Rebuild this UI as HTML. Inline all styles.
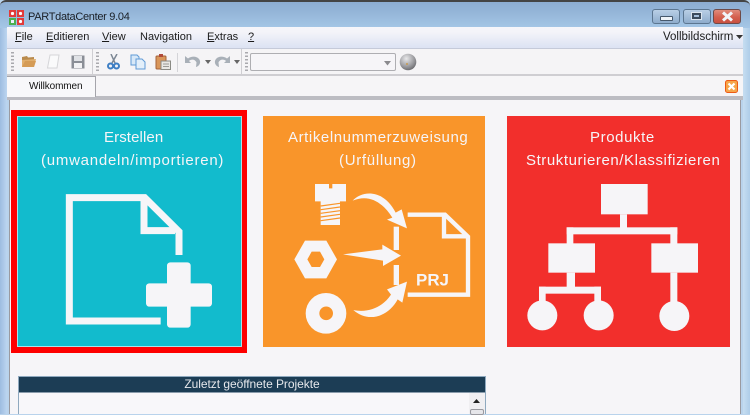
<!DOCTYPE html>
<html lang="de">
<head>
<meta charset="utf-8">
<title>PARTdataCenter 9.04</title>
<style>
html,body{margin:0;padding:0;width:750px;height:414px;overflow:hidden;background:#b9d3ec;font-family:"Liberation Sans",sans-serif}
.a{position:absolute}
#title{left:0;top:0;width:750px;height:28px;background:linear-gradient(180deg,#8dadd1 0,#94b5d8 10px,#a6c8e7 27px);border-top:2px solid #444;box-sizing:border-box;border-radius:6px 6px 0 0}
#leftb{left:0;top:28px;width:7px;height:386px;background:linear-gradient(90deg,#9dbce0,#bcd5f0)}
#rightb{left:743px;top:28px;width:7px;height:386px;background:linear-gradient(90deg,#c6ddf1,#aecde8)}
#menu{left:7px;top:27px;width:736px;height:21px;background:linear-gradient(180deg,#f6f6fa 0,#f4f4f9 5px,#dde3f3 20px)}
#tb{left:7px;top:48px;width:736px;height:28px;background:#f5f4f6;border-top:1px solid #c5cad9;border-bottom:2px solid #cfced2;box-sizing:border-box}
#tabs{left:7px;top:76px;width:736px;height:21px;background:#f6f5f7}
#bar{left:7px;top:96px;width:736px;height:4px;background:#bcbcc2}
#content{left:9px;top:100px;width:732px;height:314px;background:#f6f5f8;border-left:1px solid #9a9aa0;border-right:1px solid #9a9aa0;box-sizing:border-box}
#tab{left:7px;top:76px;width:89px;height:21px;background:#f8f8fa;border:1px solid #a5a5ab;border-bottom:0;border-left:0;box-sizing:border-box}
#tabt{left:29px;top:79px;font-size:10px;line-height:15px;color:#111;letter-spacing:-.1px;white-space:nowrap}
.m{top:30px;font-size:11px;line-height:15px;color:#1b1b1b;white-space:nowrap}
.t{color:#f6f5f8;font-size:15px;line-height:23px;white-space:nowrap}
.g{width:3px;height:21px;top:52px;background:repeating-linear-gradient(180deg,#a9a9ad 0,#a9a9ad 1.5px,transparent 1.5px,transparent 3.5px)}
</style>
</head>
<body>
<div class="a" id="title"></div>
<div class="a" id="leftb"></div>
<div class="a" id="rightb"></div>
<div class="a" id="menu"></div>
<div class="a" id="tb"></div>
<div class="a" id="tabs"></div>
<div class="a" id="bar"></div>
<div class="a" id="content"></div>
<div class="a" id="tab"></div>
<div class="a" id="tabt">Willkommen</div>

<svg class="a" style="left:9px;top:10px" width="16" height="15" viewBox="0 0 16 15">
<rect x="0" y="0" width="7" height="7" fill="#e23a3a"/><rect x="8" y="0" width="7" height="7" fill="#e23a3a"/>
<rect x="0" y="8" width="7" height="7" fill="#4caf50"/><rect x="8" y="8" width="7" height="7" fill="#e23a3a"/>
<circle cx="3.500" cy="3.500" r="1.600" fill="#fff"/><circle cx="11.500" cy="3.500" r="1.600" fill="#fff"/><rect x="2" y="10" width="3" height="3" fill="#eef"/><circle cx="11.500" cy="11.500" r="1.600" fill="#fff"/>
</svg>
<div class="a" style="left:28px;top:10px;font-size:11px;line-height:15px;color:#1a1f26;white-space:nowrap;letter-spacing:-.3px">PARTdataCenter 9.04</div>

<div class="a" style="left:652px;top:9px;width:28px;height:15px;box-sizing:border-box;border:1px solid #5c7690;border-radius:3px;background:linear-gradient(180deg,#b9cfe6,#8eaccc)"></div>
<div class="a" style="left:660px;top:16px;width:11px;height:3px;background:#eef3f8;border:1px solid #46586c;border-radius:1px"></div>
<div class="a" style="left:683px;top:9px;width:28px;height:15px;box-sizing:border-box;border:1px solid #5c7690;border-radius:3px;background:linear-gradient(180deg,#b9cfe6,#8eaccc)"></div>
<div class="a" style="left:692px;top:13px;width:9px;height:6px;box-sizing:border-box;border:2px solid #3c4c5e;outline:1px solid #dce6f0"></div>
<div class="a" style="left:713px;top:9px;width:28px;height:15px;box-sizing:border-box;border:1px solid #6e4a48;border-radius:3px;background:linear-gradient(180deg,#e08c7c 0,#d4604e 55%,#c85040 100%)"></div>
<svg class="a" style="left:721px;top:11px" width="13" height="11" viewBox="0 0 13 11"><path d="M2 1.500L11 9.500M11 1.500L2 9.500" stroke="#f2f4f8" stroke-width="3"/></svg>

<div class="a m" style="left:15px"><u>F</u>ile</div>
<div class="a m" style="left:46px"><u>E</u>ditieren</div>
<div class="a m" style="left:102px"><u>V</u>iew</div>
<div class="a m" style="left:140px">Navigation</div>
<div class="a m" style="left:207px"><u>E</u>xtras</div>
<div class="a m" style="left:248px"><u>?</u></div>
<div class="a m" style="left:663px;font-size:11.5px">Vollbildschirm</div>
<svg class="a" style="left:736px;top:35px" width="8" height="5"><path d="M0 0H7L3.500 4Z" fill="#333"/></svg>

<div class="a g" style="left:11px"></div>
<svg class="a" style="left:21px;top:54px" width="16" height="15" viewBox="0 0 16 15"><path d="M1 3L6 2L7 3.500L13 3V6H1Z" fill="#b98a4c"/><path d="M1 13L1 6L15 5L13 13Z" fill="#e0ae6c"/><path d="M1 13L4 7H15L13 13Z" fill="#d59b55"/></svg>
<svg class="a" style="left:46px;top:54px" width="15" height="15" viewBox="0 0 15 15"><path d="M4 1H13L11 14H1.500Z" fill="#fafafb" stroke="#d5d5d8"/></svg>
<svg class="a" style="left:71px;top:55px" width="14" height="14" viewBox="0 0 14 14"><rect x=".5" y=".5" width="13" height="13" fill="#8a8e96"/><rect x="3" y="1" width="8" height="5" fill="#e0e2e6"/><rect x="3" y="8" width="8" height="5" fill="#f2f2f4"/></svg>
<div class="a" style="left:92px;top:49px;width:1px;height:25px;background:#cfced2"></div>
<div class="a g" style="left:96px"></div>
<svg class="a" style="left:107px;top:54px" width="13" height="16" viewBox="0 0 13 16"><path d="M10 0L5 9M4 0L8 9" stroke="#7c8794" stroke-width="1.500" fill="none"/><circle cx="3.500" cy="12" r="2.500" fill="none" stroke="#3f7fc4" stroke-width="2"/><circle cx="9.500" cy="12" r="2.500" fill="none" stroke="#3f7fc4" stroke-width="2"/></svg>
<svg class="a" style="left:130px;top:54px" width="16" height="16" viewBox="0 0 16 16"><path d="M1 1H7L9 3V11H1Z" fill="#d7e8f8" stroke="#5f9ad6"/><path d="M6 5H12L15 8V15H6Z" fill="#e3effa" stroke="#5f9ad6"/></svg>
<svg class="a" style="left:155px;top:54px" width="16" height="16" viewBox="0 0 16 16"><rect x="1" y="2" width="10" height="13" rx="1" fill="#d9965a" stroke="#a5633a"/><rect x="4" y="0" width="4" height="3" fill="#b04a3a"/><rect x="6" y="7" width="9.500" height="8.500" fill="#e8e8e4" stroke="#8a8a84"/><path d="M8 10H14M8 12.500H14" stroke="#9a9a96"/></svg>
<div class="a" style="left:177px;top:53px;width:1px;height:19px;background:#d4d4d8"></div>
<svg class="a" style="left:185px;top:55px" width="16" height="13" viewBox="0 0 16 13"><path d="M0 1V8H6L4 6C6 4 10 4 11.500 7.500L11 12C14.500 11 16.500 7 14 4C11.500 1 6.500 1 3 3.500Z" fill="#a9b0b8"/></svg>
<svg class="a" style="left:205px;top:60px" width="6" height="4"><path d="M0 0H6L3 4Z" fill="#666"/></svg>
<svg class="a" style="left:214px;top:55px" width="16" height="13" viewBox="0 0 16 13"><path d="M16 1V8H10L12 6C10 4 6 4 4.500 7.500L5 12C1.500 11 -.5 7 2 4C4.500 1 9.500 1 13 3.500Z" fill="#a9b0b8"/></svg>
<svg class="a" style="left:234px;top:60px" width="6" height="4"><path d="M0 0H6L3 4Z" fill="#666"/></svg>
<div class="a" style="left:241px;top:49px;width:1px;height:25px;background:#cfced2"></div>
<div class="a g" style="left:245px"></div>
<div class="a" style="left:250px;top:53px;width:146px;height:18px;box-sizing:border-box;border:1px solid #aeaeb2;border-radius:2px;background:#f6f5f8"></div>
<svg class="a" style="left:384px;top:61px" width="8" height="5"><path d="M0 0H7L3.500 4.500Z" fill="#8a8a8e"/></svg>
<svg class="a" style="left:399px;top:53px" width="18" height="18"><defs><radialGradient id="gl" cx=".4" cy=".3" r=".8"><stop offset="0" stop-color="#e8e8ea"/><stop offset=".6" stop-color="#9a9a9e"/><stop offset="1" stop-color="#5c5c60"/></radialGradient></defs><circle cx="9" cy="9" r="8.300" fill="url(#gl)"/><circle cx="8" cy="11" r="1" fill="#c89a50"/></svg>

<svg class="a" style="left:725px;top:80px" width="13" height="13" viewBox="0 0 13 13"><rect x=".5" y=".5" width="12" height="12" rx="2" fill="#f6a64a" stroke="#ee5a14"/><path d="M3.500 3.500L9.500 9.500M9.500 3.500L3.500 9.500" stroke="#fff" stroke-width="2.200"/></svg>

<!-- tile 1 -->
<div class="a" style="left:11px;top:110px;width:236px;height:243px;background:#fe0000"></div>
<div class="a" style="left:17px;top:116px;width:225px;height:231px;box-sizing:border-box;background:#12bbcd;border:1px solid #a8e2e8"></div>
<div class="a t" style="left:104px;top:126px;letter-spacing:.1px">Erstellen</div>
<div class="a t" style="left:41px;top:149px;letter-spacing:.75px">(umwandeln/importieren)</div>
<svg class="a" style="left:0;top:105px" width="260" height="255" viewBox="0 0 780 765">
<path d="M482 648H208V278H434L537 380V450" fill="none" stroke="#f6f5f8" stroke-width="21"/>
<path d="M432 285V377H525" fill="none" stroke="#f6f5f8" stroke-width="21"/>
<path d="M501 482a10 10 0 0 1 10-10h51a10 10 0 0 1 10 10v53h54a10 10 0 0 1 10 10v50a10 10 0 0 1-10 10h-54v53a10 10 0 0 1-10 10h-51a10 10 0 0 1-10-10v-53h-53a10 10 0 0 1-10-10v-50a10 10 0 0 1 10-10h53z" fill="#f6f5f8"/>
</svg>

<!-- tile 2 -->
<div class="a" style="left:263px;top:116px;width:222px;height:231px;background:#f9952a"></div>
<div class="a t" style="left:288px;top:126px;letter-spacing:.58px">Artikelnummerzuweisung</div>
<div class="a t" style="left:339px;top:149px;letter-spacing:.7px">(Urfüllung)</div>
<svg class="a" style="left:255px;top:170px" width="240" height="180" viewBox="0 0 720 540">
<g fill="#f6f5f8">
<path d="M180 42H222V55H232V42H273V94H255V165H197V94H180Z"/>
<path d="M118 268L150 212H214L246 268L214 325H150ZM157 268L170 291H195L208 268L195 245H170Z" fill-rule="evenodd"/>
<path fill-rule="evenodd" d="M152 430a61 61 0 1 0 122 0a61 61 0 1 0-122 0zM193 430a20 20 0 1 1 41 0a20 20 0 1 1-41 0z"/>
<path d="M293 92C320 62 385 55 422 128L440 118L456 175L396 149L412 143C385 100 345 70 293 92Z"/>
<path d="M264 253L382 238V224L438 257L384 288V272Z"/>
<path d="M295 420C340 430 385 410 408 374L396 358L456 335L442 398L428 388C400 440 340 460 295 420Z"/>
<rect x="416" y="170" width="16" height="70"/>
<rect x="416" y="285" width="16" height="60"/>
</g>
<g stroke="#f9952a" stroke-width="3.500"><path d="M197 108L255 100M197 119L255 111M197 130L255 122M197 141L255 133M197 152L255 144"/></g>
<path d="M458 134H570L639 200V374H458" fill="none" stroke="#f6f5f8" stroke-width="13"/>
<path d="M567 134V199H639" fill="none" stroke="#f6f5f8" stroke-width="13"/>
<text x="483" y="346" font-family="Liberation Sans" font-weight="700" font-size="50" fill="#f6f5f8" textLength="99" lengthAdjust="spacingAndGlyphs">PRJ</text>
</svg>

<!-- tile 3 -->
<div class="a" style="left:507px;top:116px;width:223px;height:231px;background:#f22f2c"></div>
<div class="a t" style="left:590px;top:126px;letter-spacing:.6px">Produkte</div>
<div class="a t" style="left:526px;top:149px;letter-spacing:.57px">Strukturieren/Klassifizieren</div>
<svg class="a" style="left:500px;top:170px" width="240" height="180" viewBox="0 0 720 540">
<g fill="#f6f5f8">
<rect x="303" y="42" width="140" height="91"/>
<rect x="360" y="133" width="21" height="42"/>
<rect x="200" y="172" width="332" height="21"/>
<rect x="200" y="172" width="20" height="50"/>
<rect x="511" y="172" width="21" height="50"/>
<rect x="145" y="220" width="140" height="88"/>
<rect x="454" y="220" width="140" height="88"/>
<rect x="200" y="308" width="25" height="44"/>
<rect x="117" y="350" width="186" height="21"/>
<rect x="117" y="350" width="20" height="50"/>
<rect x="283" y="350" width="20" height="50"/>
<rect x="511" y="308" width="21" height="95"/>
<circle cx="127" cy="436" r="45"/>
<circle cx="296" cy="436" r="45"/>
<circle cx="523" cy="438" r="45"/>
</g>
</svg>

<!-- table -->
<div class="a" style="left:18px;top:376px;width:468px;height:38px;box-sizing:border-box;border:1px solid #8fa9bf;border-bottom:0;background:#f8f7fa"></div>
<div class="a" style="left:19px;top:377px;width:466px;height:15px;background:#1c3d55;color:#e6e8ec;font-size:12px;line-height:15px;text-align:center;letter-spacing:-.05px;border-bottom:1px solid #8a9cac">Zuletzt geöffnete Projekte</div>
<div class="a" style="left:469px;top:393px;width:16px;height:21px;background:#f0eff2"></div>
<svg class="a" style="left:473px;top:399px" width="8" height="5"><path d="M0 4L3.500 0L7 4Z" fill="#222"/></svg>
<div class="a" style="left:470px;top:409px;width:14px;height:6px;box-sizing:border-box;border:1px solid #9a9aa0;border-radius:2px;background:#e6e6ea"></div>
</body>
</html>
